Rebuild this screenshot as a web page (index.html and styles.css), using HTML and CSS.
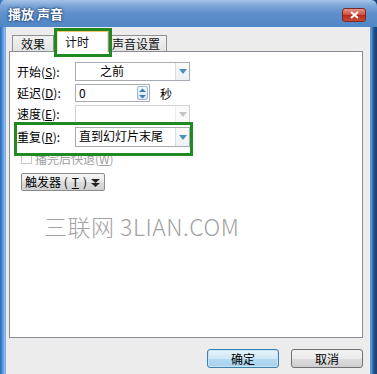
FILE: index.html
```html
<!DOCTYPE html>
<html lang="zh">
<head>
<meta charset="utf-8">
<title>播放 声音</title>
<link rel="stylesheet" href="styles.css">
</head>
<body>
<div class="window">
  <div class="titlebar">
    <span class="title">播放 声音</span>
    <span class="close"><svg width="9" height="8" viewBox="0 0 9 8"><path d="M1 1 L8 7 M8 1 L1 7" stroke="#fff" stroke-width="2"/></svg></span>
  </div>
  <div class="client">
    <div class="tabs">
      <div class="tab">效果</div>
      <div class="tab active">计时</div>
      <div class="tab">声音设置</div>
      <div class="mark mark-tab"></div>
    </div>
    <div class="panel">
      <div class="form">
        <div class="row r1">
          <span class="label">开始(<u>S</u>):</span>
          <div class="combo"><span class="combo-text centered">之前</span><span class="drop"><svg width="8" height="5" viewBox="0 0 8 5"><path d="M0 0 H8 L4 5 Z" fill="#4f8fc0"/></svg></span></div>
        </div>
        <div class="row r2">
          <span class="label">延迟(<u>D</u>):</span>
          <div class="spinwrap">
            <div class="spin"><span class="combo-text">0</span><span class="spinbtn"><svg width="9" height="13" viewBox="0 0 9 13"><path d="M1 5 L4.5 1.5 L8 5 Z" fill="#3f7fb5"/><path d="M1 8 L4.5 11.5 L8 8 Z" fill="#3f7fb5"/></svg></span></div>
            <span class="unit">秒</span>
          </div>
        </div>
        <div class="row r3">
          <span class="label">速度(<u>E</u>):</span>
          <div class="combo disabled"><span class="combo-text"></span><span class="drop"><svg width="8" height="5" viewBox="0 0 8 5"><path d="M0 0 H8 L4 5 Z" fill="#c4c4c4"/></svg></span></div>
        </div>
        <div class="row r4">
          <span class="label">重复(<u>R</u>):</span>
          <div class="combo"><span class="combo-text">直到幻灯片末尾</span><span class="drop"><svg width="8" height="5" viewBox="0 0 8 5"><path d="M0 0 H8 L4 5 Z" fill="#4f8fc0"/></svg></span></div>
        </div>
        <div class="check">
          <span class="box"></span>
          <span class="check-text">播完后快退(<u>W</u>)</span>
        </div>
        <div class="mark mark-row"></div>
        <div class="trigger">触发器 (<u>T</u>) <svg width="9" height="9" viewBox="0 0 9 9"><path d="M0 1 H9 L4.5 5 Z M0 5 H9 L4.5 9 Z" fill="#222"/></svg></div>
      </div>
      <div class="watermark">三联网 3LIAN.COM</div>
    </div>
    <div class="buttons">
      <button class="btn default">确定</button>
      <button class="btn">取消</button>
    </div>
  </div>
</div>
</body>
</html>
```
FILE: styles.css
```css
* { box-sizing: border-box; }
html, body { margin: 0; padding: 0; }
body {
  width: 377px;
  height: 374px;
  overflow: hidden;
  font-family: "Noto Sans CJK SC", "Liberation Sans", sans-serif;
  font-size: 12px;
  color: #000;
}
.window {
  width: 377px;
  height: 374px;
  display: flex;
  flex-direction: column;
  background: linear-gradient(90deg, #2a68b8 0px, #5b9be0 3px, #9fc3ea 5px, #5f98d8 6px, #3f7cc8 50%, #5f98d8 371px, #1f4f92 374px, #163f7a 377px);
}
.titlebar {
  height: 27px;
  flex: none;
  display: flex;
  justify-content: space-between;
  align-items: flex-start;
  padding: 0 11px 0 8px;
  background: linear-gradient(#a6c3e6 0px, #7aa5d8 6px, #5d8fcb 14px, #5187c6 27px);
  border-radius: 6px 6px 0 0;
}
.title {
  margin-top: 6px;
  color: #fff;
  font-weight: bold;
  font-size: 13px;
  line-height: 15px;
  text-shadow: 0 0 2px #1b3f70, 0 0 3px #1b3f70;
}
.close {
  margin-top: 8px;
  width: 24px;
  height: 14px;
  display: flex;
  align-items: center;
  justify-content: center;
  border: 1px solid #7a2a22;
  border-radius: 3px;
  background: linear-gradient(#e6958a, #cf4c3c 50%, #b5281a 51%, #c84c36);
}
.client {
  flex: 1;
  margin: 0 7px 0 6px;
  background: #ececec;
  padding-top: 3px;
  position: relative;
}
.tabs {
  position: relative;
  display: flex;
  align-items: flex-end;
  height: 21px;
  padding-left: 6px;
  z-index: 1;
}
.tab {
  height: 16px;
  line-height: 15px;
  padding: 0 3px 0 3px;
  border: 1px solid #8e8f8f;
  border-bottom: none;
  background: linear-gradient(#f2f2f2, #e3e3e3);
  font-size: 12px;
  color: #111;
}
.tab:first-child { width: 42px; padding-left: 8px; }
.tab:nth-child(3) { width: 58px; padding-left: 2px; margin-left: 0; }
.tab.active {
  width: 53px;
  height: 22px;
  margin: 0 0 -1px 2px;
  padding-left: 8px;
  line-height: 19px;
  background: #fff;
  border-color: #8e8f8f;
  border-top: 2px solid #f4c46b;
  box-shadow: inset 1px 0 #fbe3b0, inset -1px 0 #fbe3b0;
}
.mark {
  position: absolute;
  border: 3px solid #1f8a22;
  pointer-events: none;
}
.mark-tab {
  left: 48px;
  top: -2px;
  width: 58px;
  height: 29px;
}
.panel {
  margin-left: 3px;
  width: 354px;
  height: 287px;
  border: 1px solid #898c95;
  background: #fff;
}
.form {
  position: relative;
  padding: 10px 0 0 7px;
}
.row {
  display: flex;
  align-items: center;
}
.r1 { height: 19px; }
.r2 { height: 18px; margin-top: 3px; }
.r3 { height: 18px; margin-top: 3px; }
.r4 { height: 20px; margin-top: 4px; }
.label {
  width: 58px;
  flex: none;
  line-height: 14px;
  white-space: nowrap;
}
u { text-decoration: underline; text-underline-offset: 1px; }
.combo {
  width: 115px;
  height: 100%;
  display: flex;
  border: 1px solid #a7acb4;
  background: #fff;
}
.combo-text {
  flex: 1;
  padding-left: 3px;
  line-height: 16px;
  white-space: nowrap;
}
.combo-text.centered { padding-left: 24px; }
.drop {
  width: 14px;
  flex: none;
  display: flex;
  align-items: center;
  justify-content: center;
  border-left: 1px solid #d9dde3;
  background: linear-gradient(#fbfbfb, #eef0f3);
}
.combo.disabled { border-color: #d2d2d2; }
.combo.disabled .drop { border-left-color: #ececec; background: #fafafa; }
.spinwrap { display: flex; align-items: center; height: 100%; }
.spin {
  width: 75px;
  height: 100%;
  display: flex;
  border: 1px solid #a7acb4;
  padding: 1px 1px 1px 0;
}
.spin .combo-text { padding-left: 3px; line-height: 14px; }
.spinbtn {
  width: 11px;
  display: flex;
  align-items: center;
  justify-content: center;
  border: 1px solid #9fb6cf;
  border-radius: 2px;
  background: linear-gradient(#f3f8fd, #d6e6f5);
}
.unit { margin-left: 10px; }
.mark-row {
  left: 4px;
  top: 70px;
  width: 179px;
  height: 34px;
}
.check {
  display: flex;
  align-items: center;
  margin-top: 5px;
  height: 13px;
  color: #a0a0a0;
}
.box {
  width: 11px;
  height: 11px;
  margin: 0 3px 0 4px;
  border: 1px solid #c7c7c7;
  background: #fff;
}
.check-text { line-height: 13px; }
.trigger {
  display: inline-flex;
  align-items: center;
  gap: 4px;
  margin: 8px 0 0 4px;
  height: 18px;
  padding: 0 4px 0 3px;
  border: 1px solid #8b8b8b;
  border-radius: 2px;
  background: linear-gradient(#f6f6f6, #e6e6e6 50%, #dcdcdc 51%, #d0d0d0);
  line-height: 14px;
}
.watermark {
  margin: 20px 0 0 34px;
  font-size: 23px;
  line-height: 30px;
  font-weight: 300;
  color: #a2a2a2;
  letter-spacing: 0.5px;
}
.buttons {
  display: flex;
  justify-content: flex-end;
  gap: 12px;
  margin: 11px 0 0 0;
  width: 357px;
}
.btn {
  width: 72px;
  height: 19px;
  padding: 0;
  font-family: "Noto Sans CJK SC", "Liberation Sans", sans-serif;
  font-size: 12px;
  line-height: 15px;
  color: #000;
  border: 1px solid #707070;
  border-radius: 3px;
  background: linear-gradient(#f3f3f3, #ebebeb 50%, #dddddd 51%, #cfcfcf);
}
.btn.default {
  border-color: #3c7fb1;
  background: linear-gradient(#e9f4fb, #cfe7f6 50%, #b4daf2 51%, #a8d0ec);
  box-shadow: inset 0 0 0 1px #c6e4f7;
}
```
